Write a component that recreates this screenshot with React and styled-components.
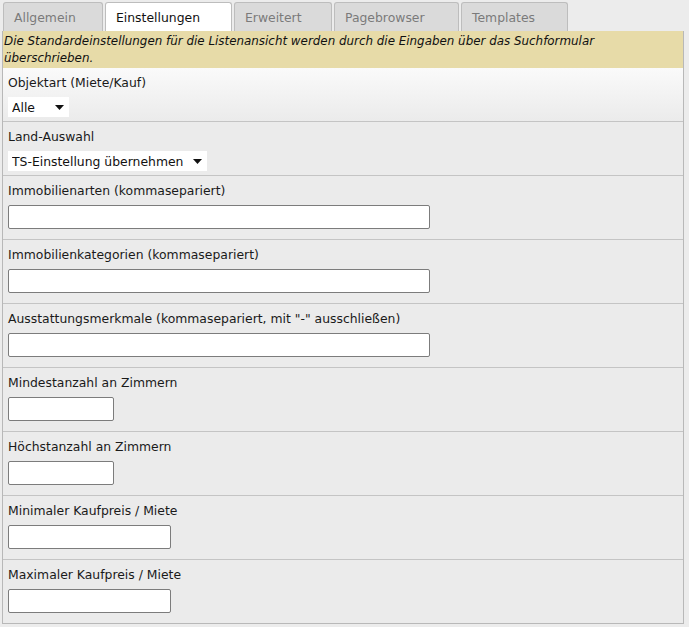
import React from "react";
import styled, { createGlobalStyle } from "styled-components";

const Global = createGlobalStyle`
  html, body { margin: 0; padding: 0; background: #ececec; }
  body { font-family: "DejaVu Sans", Verdana, sans-serif; font-size: 12.4px; color: #111; }
  #root { padding: 2px 5px 0 2px; }
`;

const Tabs = styled.div`
  display: flex;
  gap: 2px;
  padding-left: 1px;
  height: 29px;
`;

const Tab = styled.div`
  box-sizing: border-box;
  width: ${(p) => p.$w}px;
  height: 29px;
  padding: 0 0 0 10px;
  display: flex;
  align-items: center;
  border: 1px solid #bdbdbd;
  border-bottom: none;
  border-radius: 3px 3px 0 0;
  background: ${(p) => (p.$active ? "#ffffff" : "#dadada")};
  color: ${(p) => (p.$active ? "#111" : "#7a7a7a")};
  font-size: 12.4px;
  white-space: nowrap;
`;

const Panel = styled.div`
  border: 1px solid #b8b8b8;
  border-top: none;
  background: #ebebeb;
`;

const Notice = styled.div`
  background: #e7dba8;
  font-style: italic;
  line-height: 17px;
  padding: 2px 0 1px 1px;
  font-size: 11.9px;
`;

const Row = styled.div`
  padding: 7px 5px ${(p) => p.$pb}px 5px;
  border-top: ${(p) => (p.$first ? "none" : "1px solid #c4c4c4")};
  background: ${(p) =>
    p.$first ? "linear-gradient(#fafafa, #ebebeb)" : "#ebebeb"};
`;

const Label = styled.div`
  line-height: 15px;
  font-size: 12.4px;
  color: #1a1a1a;
`;

const Control = styled.div`
  margin-top: 7px;
  display: flex;
`;

const SelectBox = styled.div`
  position: relative;
  width: ${(p) => p.$w}px;
  height: ${(p) => p.$h}px;
`;

const Select = styled.select`
  appearance: none;
  -webkit-appearance: none;
  box-sizing: border-box;
  width: 100%;
  height: 100%;
  border: none;
  background: #fff;
  font: inherit;
  font-size: 12.4px;
  color: #111;
  padding: 0 0 0 4px;
  margin: 0;
  outline: none;
  border-radius: 0;
`;

const Arrow = styled.svg`
  position: absolute;
  right: ${(p) => p.$r}px;
  top: 50%;
  margin-top: -2px;
  pointer-events: none;
`;

const Input = styled.input`
  box-sizing: border-box;
  width: ${(p) => p.$w}px;
  height: 24px;
  border: 1px solid #7c7c7c;
  border-radius: 2px;
  background: #fff;
  margin: 0;
  padding: 0 3px;
  font: inherit;
`;

const tabs = [
  { label: "Allgemein", w: 100 },
  { label: "Einstellungen", w: 127, active: true },
  { label: "Erweitert", w: 98 },
  { label: "Pagebrowser", w: 125 },
  { label: "Templates", w: 107 },
];

const rows = [
  { label: "Immobilienarten (kommasepariert)", w: 422 },
  { label: "Immobilienkategorien (kommasepariert)", w: 422 },
  { label: 'Ausstattungsmerkmale (kommasepariert, mit "-" ausschließen)', w: 422 },
  { label: "Mindestanzahl an Zimmern", w: 106 },
  { label: "Höchstanzahl an Zimmern", w: 106 },
  { label: "Minimaler Kaufpreis / Miete", w: 163 },
  { label: "Maximaler Kaufpreis / Miete", w: 163 },
];

const DropArrow = ({ r }) => (
  <Arrow $r={r} width="9" height="5" viewBox="0 0 9 5">
    <path d="M0 0 H9 L4.5 5 Z" fill="#111" />
  </Arrow>
);

export default function App() {
  return (
    <>
      <Global />
      <Tabs>
        {tabs.map((t) => (
          <Tab key={t.label} $w={t.w} $active={t.active}>
            {t.label}
          </Tab>
        ))}
      </Tabs>
      <Panel>
        <Notice>
          Die Standardeinstellungen für die Listenansicht werden durch die Eingaben über das Suchformular
          <br />
          überschrieben.
        </Notice>
        <Row $first $pb={4}>
          <Label>Objektart (Miete/Kauf)</Label>
          <Control>
            <SelectBox $w={61} $h={20}>
              <Select defaultValue="alle">
                <option value="alle">Alle</option>
                <option value="miete">Miete</option>
                <option value="kauf">Kauf</option>
              </Select>
              <DropArrow r={5} />
            </SelectBox>
          </Control>
        </Row>
        <Row $pb={4}>
          <Label>Land-Auswahl</Label>
          <Control>
            <SelectBox $w={199} $h={20}>
              <Select defaultValue="ts">
                <option value="ts">TS-Einstellung übernehmen</option>
              </Select>
              <DropArrow r={5} />
            </SelectBox>
          </Control>
        </Row>
        {rows.map((r) => (
          <Row key={r.label} $pb={10}>
            <Label>{r.label}</Label>
            <Control>
              <Input type="text" $w={r.w} />
            </Control>
          </Row>
        ))}
      </Panel>
    </>
  );
}
